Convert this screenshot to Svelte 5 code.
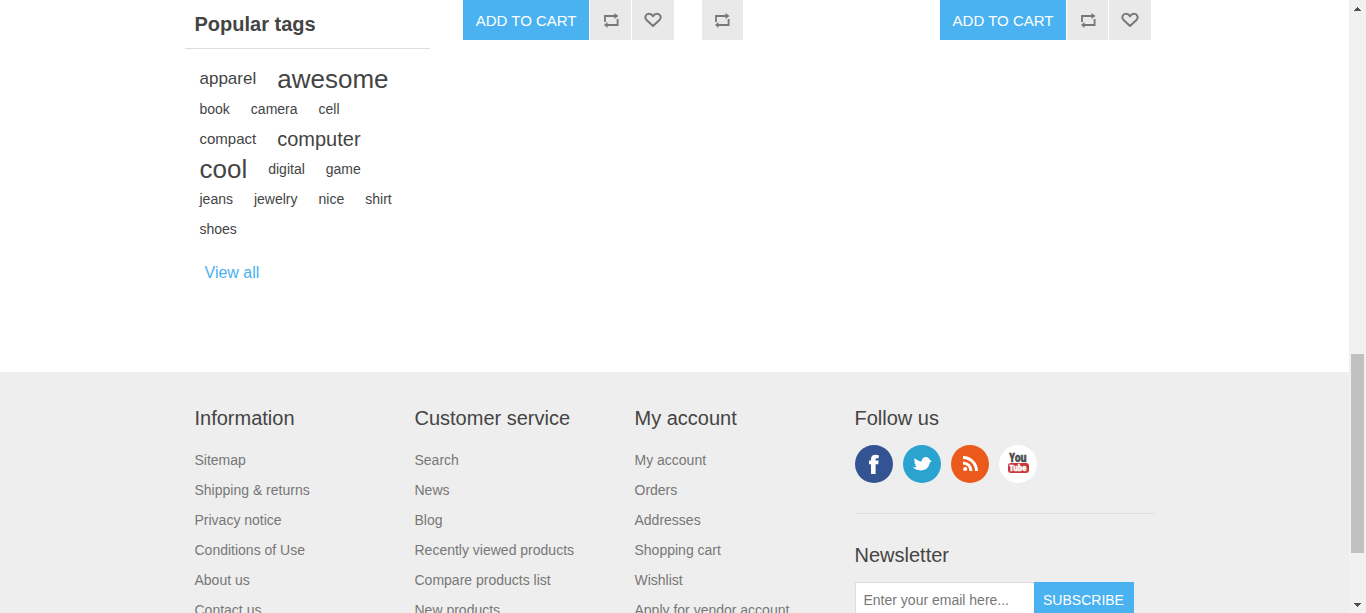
<script>
  const products = [
    { name: 'first', buyable: true },
    { name: 'second', buyable: false },
    { name: 'third', buyable: true }
  ];

  const tags = [
    ['apparel', 'md'],
    ['awesome', 'xl'],
    ['book', 'xs'],
    ['camera', 'xs'],
    ['cell', 'xs'],
    ['compact', 'sm'],
    ['computer', 'lg'],
    ['cool', 'xl'],
    ['digital', 'xs'],
    ['game', 'xs'],
    ['jeans', 'xs'],
    ['jewelry', 'xs'],
    ['nice', 'xs'],
    ['shirt', 'xs'],
    ['shoes', 'xs']
  ];

  const columns = [
    {
      title: 'Information',
      links: ['Sitemap', 'Shipping & returns', 'Privacy notice', 'Conditions of Use', 'About us', 'Contact us']
    },
    {
      title: 'Customer service',
      links: ['Search', 'News', 'Blog', 'Recently viewed products', 'Compare products list', 'New products']
    },
    {
      title: 'My account',
      links: ['My account', 'Orders', 'Addresses', 'Shopping cart', 'Wishlist', 'Apply for vendor account']
    }
  ];
</script>

{#snippet compareButton()}
  <button class="icon-button" type="button" aria-label="Add to compare list">
    <svg width="16" height="16" viewBox="0 0 16 16" aria-hidden="true">
      <path d="M2 10V4H12" fill="none" stroke="#777" stroke-width="1.8" />
      <path d="M11.5 1L15.5 4L11.5 7Z" fill="#777" />
      <path d="M14.6 7V13H4" fill="none" stroke="#777" stroke-width="1.8" />
      <path d="M4.5 10L1 13L4.5 16Z" fill="#777" />
    </svg>
  </button>
{/snippet}

<div class="window">
  <div class="page">
    <div class="content">
      <aside class="sidebar">
        <h2>Popular tags</h2>
        <ul class="tags">
          {#each tags as [label, size]}
            <li><a class={size} href="#tag">{label}</a></li>
          {/each}
        </ul>
        <a class="view-all" href="#all">View all</a>
      </aside>

      <main class="products">
        {#each products as product (product.name)}
          <div class="product">
            {#if product.buyable}
              <div class="buttons full">
                <button class="cart" type="button">ADD TO CART</button>
                {@render compareButton()}
                <button class="icon-button" type="button" aria-label="Add to wishlist">
                  <svg width="18" height="16" viewBox="0 0 18 16" aria-hidden="true">
                    <path
                      d="M9 14L2.8 8.2C-0.2 5 2 1.8 5 1.8C7 1.8 8.3 3 9 4.2C9.7 3 11 1.8 13 1.8C16 1.8 18.2 5 15.2 8.2Z"
                      fill="none"
                      stroke="#777"
                      stroke-width="2"
                      stroke-linejoin="round"
                    />
                  </svg>
                </button>
              </div>
            {:else}
              <div class="buttons single">{@render compareButton()}</div>
            {/if}
          </div>
        {/each}
      </main>
    </div>

    <footer>
      <div class="footer-inner">
        {#each columns as column}
          <nav class="column" aria-label={column.title}>
            <h3>{column.title}</h3>
            <ul>
              {#each column.links as link}
                <li><a href="#page">{link}</a></li>
              {/each}
            </ul>
          </nav>
        {/each}

        <section class="follow">
          <h3>Follow us</h3>
          <div class="social">
            <a href="#facebook" aria-label="Facebook">
              <svg width="38" height="38" viewBox="0 0 38 38" aria-hidden="true">
                <circle cx="19" cy="19" r="19" fill="#335393" />
                <path
                  d="M16 29V19.2H14V15.6H16V14.2C16 11.2 17.6 9.8 20.6 9.8C21.9 9.8 23 10 24 10.4L23.4 13.6C21.6 13.1 20.6 13.4 20.6 14.8V15.6H23.6L23.3 19.2H20.6V29Z"
                  fill="#fff"
                />
              </svg>
            </a>
            <a href="#twitter" aria-label="Twitter">
              <svg width="38" height="38" viewBox="0 0 38 38" aria-hidden="true">
                <circle cx="19" cy="19" r="19" fill="#2ba3d0" />
                <path
                  d="M9.6 21.8C11.2 22.6 12.6 22.5 14 21.8C12.8 21.4 12.2 20.7 12 19.9H13.2C12 19.2 11.3 18.2 11.3 17.1L12.4 17.4C11.3 16.1 11 14.6 11.5 13.2C13.8 15.2 16.4 16.2 18.6 16.5C18.9 13.6 20.6 12 22.8 12C24.6 12 26 13 26.6 14.6L28.8 16.4L26.8 17.2C26.4 22.1 22.8 25.4 17.6 25.4C14.4 25.4 11.4 24 9.6 21.8Z"
                  fill="#fff"
                />
              </svg>
            </a>
            <a href="#rss" aria-label="RSS">
              <svg width="38" height="38" viewBox="0 0 38 38" aria-hidden="true">
                <circle cx="19" cy="19" r="19" fill="#eb5a1a" />
                <circle cx="14.2" cy="24" r="2.1" fill="#fff" />
                <path
                  d="M12 17.9A8 8 0 0 1 20 26M12 12.5A13.5 13.5 0 0 1 25.5 26"
                  fill="none"
                  stroke="#fff"
                  stroke-width="3"
                />
              </svg>
            </a>
            <a href="#youtube" aria-label="YouTube">
              <svg width="38" height="38" viewBox="0 0 38 38" aria-hidden="true">
                <circle cx="19" cy="19" r="19" fill="#fff" />
                <text class="logo-text" x="19" y="17" font-size="12" fill="#4a4a4a" stroke="#4a4a4a">You</text>
                <rect x="9" y="18" width="21" height="10" rx="3" fill="#c8373b" />
                <text class="logo-text" x="19" y="26" font-size="9" fill="#fff" stroke="#fff">Tube</text>
              </svg>
            </a>
          </div>

          <div class="newsletter">
            <h3>Newsletter</h3>
            <form>
              <input type="email" placeholder="Enter your email here..." aria-label="Sign up for our newsletter" />
              <button type="button">SUBSCRIBE</button>
            </form>
          </div>
        </section>
      </div>
    </footer>
  </div>

  <div class="scrollbar" aria-hidden="true">
    <svg width="7" height="4" viewBox="0 0 7 4"><path d="M3 0h1v1h1v1h1v1h1v1H0V3h1V2h1V1h1Z" fill="#505050" /></svg>
    <div class="track"><div class="thumb"></div></div>
    <svg width="7" height="4" viewBox="0 0 7 4"><path d="M3 4h1V3h1V2h1V1h1V0H0v1h1v1h1v1h1Z" fill="#505050" /></svg>
  </div>
</div>

<style>
  :global(body) {
    background: #fff;
  }

  .window {
    display: flex;
    height: 100vh;
    overflow: hidden;
    font-family: 'Liberation Sans', Arial, sans-serif;
    font-size: 14px;
    color: #444;
  }

  .window :is(h2, h3, ul) {
    margin: 0;
    padding: 0;
    list-style: none;
  }

  a {
    color: inherit;
    text-decoration: none;
  }

  button {
    border: 0;
    padding: 0;
    font-family: inherit;
    cursor: pointer;
  }

  .page {
    flex: 1;
    min-width: 0;
  }

  .content {
    display: flex;
    justify-content: space-between;
    max-width: 980px;
    margin: 0 auto;
    padding-bottom: 83px;
  }

  .sidebar {
    width: 25%;
  }

  h2 {
    font-size: 20px;
    line-height: 48px;
    padding: 0 10px !important;
    border-bottom: 1px solid #ddd;
  }

  .tags {
    display: flex;
    flex-wrap: wrap;
    column-gap: 21px;
    line-height: 30px;
    padding: 15px 20px 0 15px !important;
  }

  .tags li {
    height: 30px;
  }

  .xs { font-size: 14px; }
  .sm { font-size: 15px; }
  .md { font-size: 17px; }
  .lg { font-size: 20px; }
  .xl { font-size: 26px; }

  .view-all {
    display: block;
    margin: 13px 20px 0;
    font-size: 16px;
    line-height: 32px;
    color: #4ab2f1;
  }

  .products {
    display: grid;
    grid-template-columns: repeat(3, 1fr);
    align-items: start;
    width: 73%;
  }

  .product {
    padding: 0 14px;
  }

  .buttons {
    display: grid;
    gap: 1px;
    height: 40px;
  }

  .full {
    grid-template-columns: 126px 1fr 1fr;
  }

  .single {
    grid-template-columns: 41px;
  }

  .cart {
    background: #4ab2f1;
    color: #fff;
    font-size: 15px;
  }

  .icon-button {
    display: flex;
    align-items: center;
    justify-content: center;
    background: #e9e9e9;
  }

  footer {
    background: #eee;
  }

  .footer-inner {
    display: grid;
    grid-template-columns: repeat(3, 1fr) 300px;
    max-width: 960px;
    margin: 0 auto;
    padding: 30px 0;
  }

  h3 {
    font-size: 20px;
    font-weight: 400;
    line-height: 32px;
  }

  .column ul {
    padding-top: 11px;
    line-height: 30px;
    color: #777;
  }

  .social {
    display: flex;
    gap: 10px;
    padding: 11px 0 30px;
    border-bottom: 1px solid #ddd;
  }

  .social svg {
    display: block;
  }

  .logo-text {
    font-family: 'Liberation Sans Narrow', 'Open Sans Condensed', 'Liberation Sans', sans-serif;
    font-weight: 700;
    text-anchor: middle;
    stroke-width: 0.5;
  }

  .newsletter {
    padding-top: 25px;
  }

  form {
    display: flex;
    padding-top: 11px;
  }

  input {
    box-sizing: border-box;
    width: 179px;
    height: 36px;
    margin: 0;
    padding: 0 8px;
    border: 1px solid #ddd;
    border-right: 0;
    border-radius: 0;
    background: #fff;
    font: inherit;
  }

  input::placeholder {
    color: #777;
  }

  form button {
    width: 100px;
    height: 36px;
    background: #4ab2f1;
    color: #fff;
    font-size: 14px;
  }

  .scrollbar {
    display: flex;
    flex-direction: column;
    align-items: center;
    box-sizing: border-box;
    width: 17px;
    padding: 7px 0 6px;
    background: #f1f1f1;
  }

  .track {
    display: flex;
    flex: 1;
    flex-direction: column;
    justify-content: flex-end;
    padding-bottom: 50px;
  }

  .thumb {
    width: 13px;
    height: 199px;
    background: #c1c1c1;
  }
</style>
